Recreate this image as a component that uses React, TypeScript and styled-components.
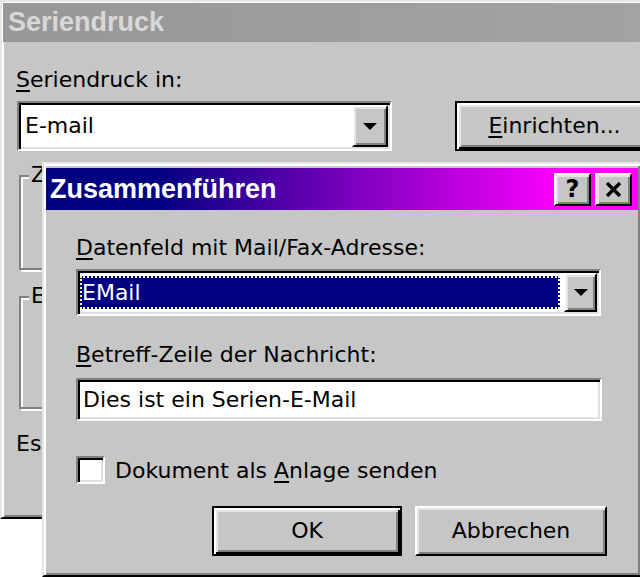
import * as React from 'react';
import styled, { createGlobalStyle, css } from 'styled-components';

const FACE = '#c6c6c6';

const GlobalStyle = createGlobalStyle`
    html, body {
        margin: 0;
        padding: 0;
        background: #fff;
    }

    body {
        font-family: 'DejaVu Sans', sans-serif;
    }
`;

const raised = css`
    border-style: solid;
    border-width: 2px;
    border-color: #fff #000 #000 #fff;
    box-shadow: inset 2px 2px 0 #e4e4e4, inset -2px -2px 0 #808080;
`;

const sunken = css`
    border-style: solid;
    border-width: 2px;
    border-color: #808080 #fff #fff #808080;
    box-shadow: inset 2px 2px 0 #000, inset -2px -2px 0 #e0e0e0;
`;

const Desktop = styled.div`
    position: relative;
    width: 640px;
    height: 577px;
    overflow: hidden;
    background: #fff;
`;

// windows on the desktop are placed where they lie on screen
const Window = styled.div<{ $left: number; $top: number; $width: number; $height: number; $pad: string }>`
    position: absolute;
    left: ${p => p.$left}px;
    top: ${p => p.$top}px;
    width: ${p => p.$width}px;
    height: ${p => p.$height}px;
    box-sizing: border-box;
    display: flex;
    flex-direction: column;
    padding: ${p => p.$pad};
    background: ${FACE};
    border-style: solid;
    border-width: 2px;
    border-color: #e6e6e6 #000 #000 #e6e6e6;
    box-shadow: inset 2px 2px 0 #fff, inset -2px -2px 0 #808080;
`;

const TitleBar = styled.div<{ $active?: boolean; $height: number; $indent: number }>`
    flex: none;
    height: ${p => p.$height}px;
    display: flex;
    align-items: center;
    padding: 0 6px 0 ${p => p.$indent}px;
    background: ${p => p.$active
        ? 'linear-gradient(90deg, #000080 18%, #ff00ff 88%)'
        : 'linear-gradient(90deg, #979797, #a3a3a3)'};
    color: ${p => p.$active ? '#fff' : '#d8d8d8'};
    font: bold 27px 'Liberation Sans', Arial, sans-serif;
`;

const TitleText = styled.span`
    flex: 1;
    white-space: nowrap;
`;

const CaptionButtons = styled.div`
    display: flex;
    gap: 4px;
`;

const CaptionButton = styled.div`
    width: 37px;
    height: 33px;
    box-sizing: border-box;
    display: flex;
    align-items: center;
    justify-content: center;
    background: ${FACE};
    color: #000;
    font: bold 24px 'DejaVu Sans', sans-serif;
    ${raised}
`;

const Body = styled.div<{ $padTop: number; $padLeft: number }>`
    display: flex;
    flex-direction: column;
    align-items: flex-start;
    padding: ${p => p.$padTop}px 0 0 ${p => p.$padLeft}px;
    font: 22px/26px 'DejaVu Sans', sans-serif;
    color: #000;
    white-space: nowrap;
`;

const Key = styled.span`
    text-decoration: underline;
    text-underline-offset: 3px;
`;

const FieldLabel = styled.div<{ $gap?: number }>`
    margin-top: ${p => p.$gap || 0}px;
`;

const Row = styled.div<{ $gap: number }>`
    display: flex;
    align-items: center;
    margin-top: ${p => p.$gap}px;
`;

const Combo = styled.div<{ $width: number; $height: number; $gap?: number }>`
    width: ${p => p.$width}px;
    height: ${p => p.$height}px;
    margin-top: ${p => p.$gap || 0}px;
    box-sizing: border-box;
    display: flex;
    padding: 2px;
    background: #fff;
    ${sunken}
`;

const ComboValue = styled.div<{ $selected?: boolean }>`
    flex: 1;
    display: flex;
    align-items: center;
    box-sizing: border-box;
    ${p => p.$selected ? css`
        margin: 3px 4px 3px 0;
        padding-left: 0;
        background: #000080;
        color: #fff;
        border: 2px dotted #f4f4d0;
    ` : css`
        padding-left: 4px;
    `}
`;

const ComboArrow = styled.div<{ $width: number }>`
    flex: none;
    width: ${p => p.$width}px;
    box-sizing: border-box;
    display: flex;
    align-items: center;
    justify-content: center;
    background: ${FACE};
    ${raised}
`;

const TextInput = styled.div<{ $gap: number }>`
    width: 526px;
    height: 43px;
    margin-top: ${p => p.$gap}px;
    box-sizing: border-box;
    display: flex;
    align-items: center;
    padding: 2px 5px;
    background: #fff;
    ${sunken}
`;

const CheckBox = styled.div`
    width: 29px;
    height: 28px;
    box-sizing: border-box;
    background: #fff;
    ${sunken}
`;

const CheckLabel = styled.span`
    margin: 3px 0 0 10px;
`;

const Button = styled.div<{ $width: number; $default?: boolean }>`
    width: ${p => p.$width}px;
    height: 50px;
    box-sizing: border-box;
    display: flex;
    align-items: center;
    justify-content: center;
    background: ${FACE};
    ${p => p.$default ? css`
        border: 2px solid #000;
        box-shadow: inset 2px 2px 0 #fff, inset -2px -2px 0 #000, inset 4px 4px 0 #e4e4e4, inset -4px -4px 0 #808080;
    ` : raised}
`;

const ButtonRow = styled.div`
    align-self: stretch;
    display: flex;
    justify-content: flex-end;
    gap: 13px;
    margin-top: 22px;
    padding-right: 31px;
`;

const GroupBox = styled.div<{ $height: number; $gap: number }>`
    position: relative;
    width: 700px;
    height: ${p => p.$height}px;
    margin: ${p => p.$gap}px 0 0 3px;
    box-sizing: border-box;
    border: 2px solid #808080;
    box-shadow: inset 2px 2px 0 #fff, 2px 2px 0 #fff;
`;

// the caption sits over the etched frame line
const GroupCaption = styled.span`
    position: absolute;
    left: 8px;
    top: -15px;
    padding: 0 2px;
    background: ${FACE};
`;

const Arrow = ({ size }: { size: number }) => (
    <svg width={size} height={size / 2} viewBox="0 0 14 7">
        <polygon points="0,0 14,0 7,7" fill="#000" />
    </svg>
);

const CloseGlyph = () => (
    <svg width="17" height="15" viewBox="0 0 17 15">
        <path d="M2 1 L15 14 M15 1 L2 14" stroke="#000" strokeWidth="3.4" />
    </svg>
);

export default function App() {
    return (
        <Desktop>
            <GlobalStyle />
            <Window $left={0} $top={0} $width={660} $height={519} $pad="1px">
                <TitleBar $height={39} $indent={5}>
                    <TitleText>Seriendruck</TitleText>
                </TitleBar>
                <Body $padTop={25} $padLeft={13}>
                    <FieldLabel><Key>S</Key>eriendruck in:</FieldLabel>
                    <Row $gap={8}>
                        <Combo $width={375} $height={50} style={{ marginLeft: 1 }}>
                            <ComboValue>E-mail</ComboValue>
                            <ComboArrow $width={36}><Arrow size={14} /></ComboArrow>
                        </Combo>
                        <Button $width={199} $default style={{ marginLeft: 63 }}>
                            <span><Key>E</Key>inrichten...</span>
                        </Button>
                    </Row>
                    <GroupBox $height={95} $gap={24}>
                        <GroupCaption>Z</GroupCaption>
                    </GroupBox>
                    <GroupBox $height={113} $gap={26}>
                        <GroupCaption>E</GroupCaption>
                    </GroupBox>
                    <FieldLabel $gap={22}>Es</FieldLabel>
                </Body>
            </Window>

            <Window $left={42} $top={162} $width={600} $height={415} $pad="4px 2px 2px 2px">
                <TitleBar $active $height={42} $indent={4}>
                    <TitleText>Zusammenführen</TitleText>
                    <CaptionButtons>
                        <CaptionButton>?</CaptionButton>
                        <CaptionButton><CloseGlyph /></CaptionButton>
                    </CaptionButtons>
                </TitleBar>
                <Body $padTop={25} $padLeft={30}>
                    <FieldLabel><Key>D</Key>atenfeld mit Mail/Fax-Adresse:</FieldLabel>
                    <Combo $width={525} $height={47} $gap={8}>
                        <ComboValue $selected>EMail</ComboValue>
                        <ComboArrow $width={33}><Arrow size={14} /></ComboArrow>
                    </Combo>
                    <FieldLabel $gap={26}><Key>B</Key>etreff-Zeile der Nachricht:</FieldLabel>
                    <TextInput $gap={10}>Dies ist ein Serien-E-Mail</TextInput>
                    <Row $gap={34}>
                        <CheckBox />
                        <CheckLabel>Dokument als <Key>A</Key>nlage senden</CheckLabel>
                    </Row>
                    <ButtonRow>
                        <Button $width={190} $default>OK</Button>
                        <Button $width={192}>Abbrechen</Button>
                    </ButtonRow>
                </Body>
            </Window>
        </Desktop>
    );
}
